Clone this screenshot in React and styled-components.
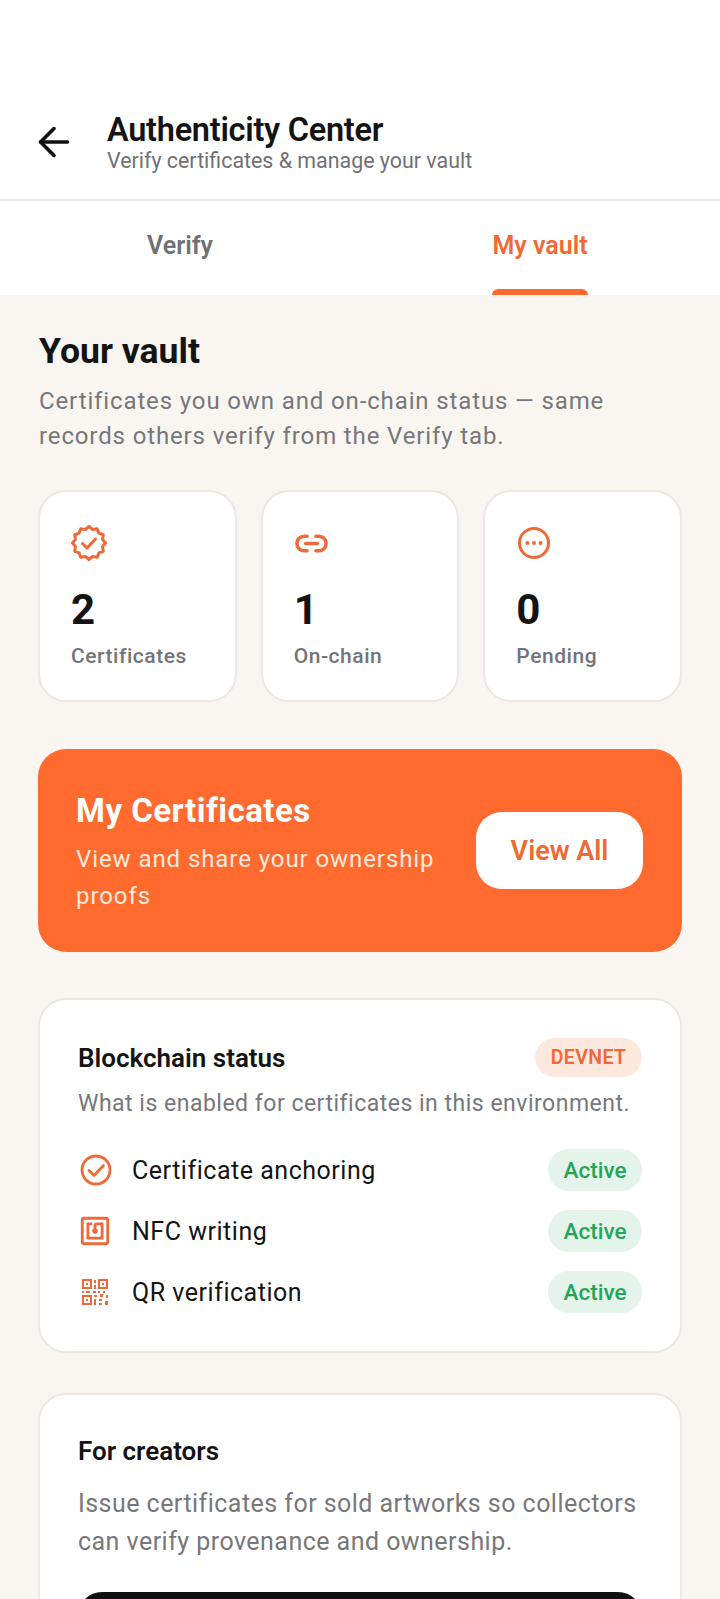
import { createGlobalStyle } from "styled-components"
import styled from "styled-components"
import { ArrowLeft, Link2 } from "lucide-react"
import { MdOutlineNfc } from "react-icons/md"

const Global = createGlobalStyle`
html, body { margin: 0; padding: 0; background: #f9f6f1; }
body { font-family: Roboto, "Noto Sans", sans-serif; color: #141414; overflow: hidden; }
* { box-sizing: border-box; }
`
const Page = styled.div`
width: 720px;
height: 1599px;
overflow: hidden;
`
const Header = styled.header`
background: #fff;
height: 201px;
border-bottom: 2px solid #ece9e3;
padding: 112px 39px 0 31px;
display: flex;
gap: 30px;
`
const BackIcon = styled(ArrowLeft)`
margin-top: 7px;
flex: none;
`
const Titles = styled.div`
display: flex;
flex-direction: column;
`
const Title = styled.h1`
margin: 0;
font-size: 32.5px;
line-height: 36px;
font-weight: 600;
letter-spacing: -0.27px;
`
const Subtitle = styled.div`
font-size: 21.4px;
line-height: 26px;
color: #6f7175;
`
const Tabs = styled.nav`
background: #fff;
height: 94px;
display: flex;
`
const Tab = styled.div`
flex: 1;
display: flex;
justify-content: center;
`
const TabLabel = styled.div`
position: relative;
height: 94px;
padding-top: 30px;
font-size: 25px;
line-height: 30px;
font-weight: 600;
color: ${p => (p.$active ? "#f26a32" : "#6f7175")};
${p => p.$active && `
  &::after {
    content: "";
    position: absolute;
    left: 0;
    right: 0;
    bottom: 0;
    height: 6px;
    background: #ff6b2f;
    border-radius: 6px 6px 0 0;
  }
`}
`
const Content = styled.main`
padding: 34px 38px 0;
display: flex;
flex-direction: column;
`
const SectionTitle = styled.h2`
margin: 0 0 0 1px;
font-size: 35.6px;
line-height: 44px;
font-weight: 700;
`
const Lead = styled.p`
margin: 11px 0 0 1px;
font-size: 24px;
line-height: 35px;
color: #77777a;
letter-spacing: 0.87px;
`
const Stats = styled.div`
margin-top: 36px;
display: grid;
grid-template-columns: repeat(3, 1fr);
gap: 24px;
`
const StatCard = styled.div`
background: #fff;
height: 212px;
border: 2px solid #ece7df;
border-radius: 28px;
padding: 33px 31px 0;
`
const StatIconWrap = styled.div`
height: 36px;
color: #f0693a;
display: flex;
align-items: center;
`
const StatValue = styled.div`
margin-top: 24px;
font-size: 42px;
line-height: 50px;
font-weight: 700;
`
const StatLabel = styled.div`
margin-top: 8px;
font-size: 21px;
line-height: 26px;
font-weight: 500;
color: #737477;
letter-spacing: 0.55px;
`
const Banner = styled.section`
margin-top: 47px;
height: 203px;
background: #ff6b2f;
border-radius: 28px;
padding: 0 39px 0 38px;
display: flex;
align-items: center;
justify-content: space-between;
gap: 36px;
`
const BannerCopy = styled.div`
padding-top: 6px;
`
const BannerTitle = styled.div`
color: #fff;
font-size: 33px;
line-height: 38px;
font-weight: 700;
letter-spacing: 0.5px;
`
const BannerText = styled.div`
margin-top: 11px;
color: #ffe9de;
font-size: 24px;
line-height: 37px;
letter-spacing: 0.92px;
`
const ViewAll = styled.button`
flex: none;
width: 167px;
height: 77px;
border: 0;
border-radius: 26px;
background: #fff;
color: #ec6a35;
font-family: inherit;
font-size: 27px;
font-weight: 600;
`
const Card = styled.section`
margin-top: ${p => p.$top}px;
background: #fff;
border: 2px solid #ece7df;
border-radius: 28px;
padding: ${p => p.$pad}px 38px 0;
height: ${p => p.$height}px;
flex: none;
`
const CardHead = styled.div`
display: flex;
align-items: center;
justify-content: space-between;
height: 39px;
`
const CardTitle = styled.h3`
margin: 0;
font-size: 26px;
line-height: 32px;
font-weight: 600;
`
const Tag = styled.span`
height: 39px;
padding: 0 15.5px;
border-radius: 20px;
background: #fde8de;
color: #f0693a;
font-size: 19.5px;
font-weight: 600;
display: flex;
align-items: center;
letter-spacing: 0.4px;
`
const CardNote = styled.p`
margin: 12px 0 0;
font-size: 23px;
line-height: 30px;
color: #77777a;
letter-spacing: 0.5px;
`
const Rows = styled.div`
margin-top: 30px;
display: flex;
flex-direction: column;
gap: 19px;
`
const Row = styled.div`
display: flex;
align-items: center;
height: 42px;
`
const RowIcon = styled.div`
width: 54px;
flex: none;
padding-left: ${p => p.$shift}px;
color: #f0693a;
display: flex;
align-items: center;
`
const RowLabel = styled.div`
flex: 1;
font-size: 25px;
font-weight: 450;
letter-spacing: 0.52px;
`
const Active = styled.span`
width: 94px;
height: 42px;
border-radius: 21px;
background: #e5f4ea;
color: #25a55a;
font-size: 22.5px;
font-weight: 500;
display: flex;
align-items: center;
justify-content: center;
`
const CreatorText = styled.p`
margin: 18px 0 0;
font-size: 25px;
line-height: 38px;
color: #77777a;
letter-spacing: 0.46px;
`
const BlackButton = styled.div`
margin-top: 31px;
height: 80px;
background: #111;
border-radius: 24px;
`

// scalloped seal with a check, 12 points like the reference
function Seal() {
  const pts = []
  for (let i = 0; i < 24; i++) {
    const r = i % 2 ? 14 : 16.5
    const a = (i * Math.PI) / 12
    pts.push(`${18 + r * Math.sin(a)},${18 - r * Math.cos(a)}`)
  }
  return (
    <svg width="36" height="36" viewBox="0 0 36 36" fill="none" stroke="currentColor" strokeWidth="3" strokeLinejoin="round" strokeLinecap="round">
      <polygon points={pts.join(" ")} />
      <path d="M11.5 18.5l4.6 4.6 8.4-9" />
    </svg>
  )
}

function Ellipsis() {
  return (
    <svg width="36" height="36" viewBox="0 0 36 36" fill="none" stroke="currentColor" strokeWidth="3">
      <circle cx="18" cy="18" r="14.5" />
      <g fill="currentColor" stroke="none">
        <circle cx="11.5" cy="18" r="2" />
        <circle cx="18" cy="18" r="2" />
        <circle cx="24.5" cy="18" r="2" />
      </g>
    </svg>
  )
}

function CheckCircle() {
  return (
    <svg width="32" height="32" viewBox="0 0 32 32" fill="none" stroke="currentColor" strokeWidth="2.8" strokeLinecap="round" strokeLinejoin="round">
      <circle cx="16" cy="16" r="14" />
      <path d="M9 16.5l5 5 9.500-10" />
    </svg>
  )
}

function QrMark() {
  return (
    <svg width="26" height="26" viewBox="0 0 26 26" fill="currentColor">
      <path fillRule="evenodd" d="M0 0h10v10H0zM2 2v6h6V2zM16 0h10v10H16zM18 2v6h6V2zM0 16h10v10H0zM2 18v6h6v-6z" />
      <path d="M4 4h2v2H4zM20 4h2v2h-2zM4 20h2v2H4z" />
      <path d="M12 1h2v3h-2zM12 6h2v4h-2zM0 12h2v2H0zM4 12h4v2H4zM11 12h3v2h-3zM16 12h2v2h-2zM21 12h2v2h-2zM12 16h3v2h-3zM18 15h3v3h-3zM24 16h2v3h-2zM12 20h2v6h-2zM17 20h3v2h-3zM17 24h3v2h-3zM23 22h3v4h-3z" />
    </svg>
  )
}

const stats = [
  { icon: <Seal />, value: "2", label: "Certificates" },
  { icon: <Link2 size={35} strokeWidth={2.4} />, value: "1", label: "On-chain" },
  { icon: <Ellipsis />, value: "0", label: "Pending" },
]
const rows = [
  { icon: <CheckCircle />, shift: 2, label: "Certificate anchoring" },
  { icon: <MdOutlineNfc size={34} />, shift: 0, label: "NFC writing" },
  { icon: <QrMark />, shift: 4, label: "QR verification" },
]

export default function App() {
  return (
    <Page>
      <Global />
      <Header>
        <BackIcon size={46} strokeWidth={1.9} color="#111" />
        <Titles>
          <Title>Authenticity Center</Title>
          <Subtitle>Verify certificates &amp; manage your vault</Subtitle>
        </Titles>
      </Header>
      <Tabs>
        <Tab><TabLabel>Verify</TabLabel></Tab>
        <Tab><TabLabel $active>My vault</TabLabel></Tab>
      </Tabs>
      <Content>
        <SectionTitle>Your vault</SectionTitle>
        <Lead>Certificates you own and on-chain status — same records others verify from the Verify tab.</Lead>
        <Stats>
          {stats.map(s => (
            <StatCard key={s.label}>
              <StatIconWrap>{s.icon}</StatIconWrap>
              <StatValue>{s.value}</StatValue>
              <StatLabel>{s.label}</StatLabel>
            </StatCard>
          ))}
        </Stats>
        <Banner>
          <BannerCopy>
            <BannerTitle>My Certificates</BannerTitle>
            <BannerText>View and share your ownership proofs</BannerText>
          </BannerCopy>
          <ViewAll>View All</ViewAll>
        </Banner>
        <Card $top={46} $pad={38} $height={355}>
          <CardHead>
            <CardTitle>Blockchain status</CardTitle>
            <Tag>DEVNET</Tag>
          </CardHead>
          <CardNote>What is enabled for certificates in this environment.</CardNote>
          <Rows>
            {rows.map(r => (
              <Row key={r.label}>
                <RowIcon $shift={r.shift}>{r.icon}</RowIcon>
                <RowLabel>{r.label}</RowLabel>
                <Active>Active</Active>
              </Row>
            ))}
          </Rows>
        </Card>
        <Card $top={40} $pad={40} $height={300}>
          <CardTitle>For creators</CardTitle>
          <CreatorText>Issue certificates for sold artworks so collectors can verify provenance and ownership.</CreatorText>
          <BlackButton />
        </Card>
      </Content>
    </Page>
  )
}
